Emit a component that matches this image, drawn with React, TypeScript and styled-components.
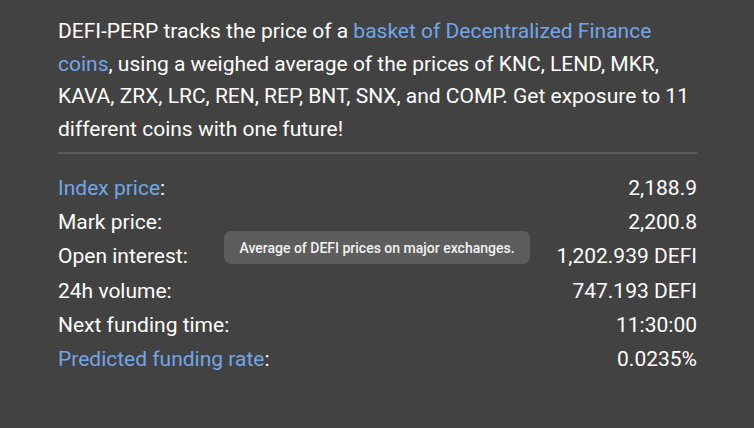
import React from 'react';
import styled, { createGlobalStyle } from 'styled-components';

const GlobalStyle = createGlobalStyle`
  html, body {
    margin: 0;
    padding: 0;
    background: #424242;
  }
  body {
    font-family: Roboto, "Noto Sans", sans-serif;
    color: #ffffff;
  }
`;

const Panel = styled.div`
  width: 754px;
  height: 428px;
  box-sizing: border-box;
  padding: 15px 57px 0 58px;
  background: #424242;
`;

const Description = styled.p`
  margin: 0;
  font-size: 21px;
  line-height: 32.5px;
  color: #ffffff;
`;

const Link = styled.span`
  color: #73a6e6;
`;

const Divider = styled.hr`
  border: 0;
  border-top: 2px solid #5b5b5b;
  margin: 7px 0 17px;
`;

const Stats = styled.div`
  position: relative;
  display: flex;
  flex-direction: column;
`;

const Row = styled.div`
  display: flex;
  justify-content: space-between;
  align-items: center;
  height: 34.2px;
  font-size: 21px;
`;

const Label = styled.span<{ $link?: boolean }>`
  color: ${(p) => (p.$link ? '#73a6e6' : '#ffffff')};
`;

const Value = styled.span`
  color: #ffffff;
`;

const Tooltip = styled.div`
  position: absolute;
  left: 166px;
  top: 60px;
  width: 306px;
  height: 33px;
  box-sizing: border-box;
  display: flex;
  align-items: center;
  justify-content: center;
  background: #5d5d5d;
  border-radius: 7px;
  font-size: 14px;
  font-weight: 500;
  color: #f2f2f2;
`;

const rows = [
  { label: 'Index price', value: '2,188.9', link: true },
  { label: 'Mark price', value: '2,200.8' },
  { label: 'Open interest', value: '1,202.939 DEFI' },
  { label: '24h volume', value: '747.193 DEFI' },
  { label: 'Next funding time', value: '11:30:00' },
  { label: 'Predicted funding rate', value: '0.0235%', link: true },
];

export default function App() {
  return (
    <>
      <GlobalStyle />
      <Panel>
        <Description>
          DEFI-PERP tracks the price of a <Link>basket of Decentralized Finance coins</Link>, using a
          weighed average of the prices of KNC, LEND, MKR, KAVA, ZRX, LRC, REN, REP, BNT, SNX, and
          COMP. Get exposure to 11 different coins with one future!
        </Description>
        <Divider />
        <Stats>
          {rows.map((r) => (
            <Row key={r.label}>
              <Label>
                <Label $link={r.link}>{r.label}</Label>:
              </Label>
              <Value>{r.value}</Value>
            </Row>
          ))}
          <Tooltip>Average of DEFI prices on major exchanges.</Tooltip>
        </Stats>
      </Panel>
    </>
  );
}
